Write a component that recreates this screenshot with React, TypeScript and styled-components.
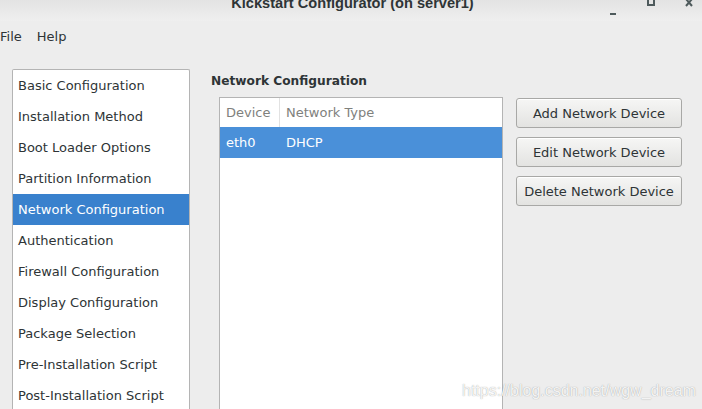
import React from 'react';
import styled, { createGlobalStyle } from 'styled-components';

const GlobalStyle = createGlobalStyle`
  html, body {
    margin: 0;
    padding: 0;
    background: #ededed;
    overflow: hidden;
  }
  body {
    font-family: "DejaVu Sans", sans-serif;
    font-size: 13px;
    color: #2e3436;
  }
`;

const Window = styled.div`
  position: relative;
  width: 702px;
  height: 409px;
  overflow: hidden;
  background: #ededed;
`;

const TitleBar = styled.div`
  display: grid;
  grid-template-columns: 1fr auto 1fr;
  height: 21px;
  overflow: hidden;
  background: linear-gradient(to bottom, #e3e3e3, #efefef);
`;

const Title = styled.span`
  grid-column: 2;
  margin-top: -5px;
  line-height: 16px;
  font-family: "Liberation Sans", sans-serif;
  font-weight: 700;
  font-size: 14.6px;
  color: #2e3436;
  padding-left: 3px;
`;

const Controls = styled.div`
  grid-column: 3;
  justify-self: end;
  display: flex;
  align-items: flex-start;
  gap: 30px;
  padding-right: 9px;
  margin-top: -1px;
`;

const MenuBar = styled.div`
  display: flex;
  gap: 15px;
  height: 29px;
  align-items: center;
  padding-top: 1px;
  box-sizing: border-box;
`;

const MenuItem = styled.span`
  font-size: 13px;
`;

const Main = styled.div`
  display: flex;
  align-items: flex-start;
  padding: 19px 0 0 12px;
  gap: 21px;
`;

const SideList = styled.ul`
  list-style: none;
  margin: 0;
  padding: 0;
  width: 176px;
  height: 360px;
  background: #fff;
  border: 1px solid #b4b4b4;
  border-bottom: none;
  border-radius: 2px 2px 0 0;
`;

const SideItem = styled.li<{ $active?: boolean }>`
  height: 31px;
  line-height: 31px;
  padding-left: 5px;
  white-space: nowrap;
  background: ${p => (p.$active ? '#3981cd' : 'transparent')};
  color: ${p => (p.$active ? '#fff' : '#2e3436')};
`;

const Content = styled.div`
  display: flex;
  flex-direction: column;
`;

const Heading = styled.div`
  margin-top: 2px;
  line-height: 20px;
  font-weight: 700;
  font-size: 12.2px;
`;

const Body = styled.div`
  display: flex;
  align-items: flex-start;
  gap: 13px;
  margin: 6px 0 0 8px;
`;

const Table = styled.div`
  width: 282px;
  height: 320px;
  background: #fff;
  border: 1px solid #b4b4b4;
  border-bottom: none;
`;

const Row = styled.div<{ $head?: boolean; $selected?: boolean }>`
  display: grid;
  grid-template-columns: 60px 1fr;
  height: ${p => (p.$head ? '29px' : '31px')};
  align-items: center;
  background: ${p => (p.$selected ? '#4a90d9' : 'transparent')};
  color: ${p => (p.$head ? '#7f817d' : p.$selected ? '#fff' : '#2e3436')};
`;

const Cell = styled.div<{ $divider?: boolean }>`
  padding-left: 6px;
  height: 100%;
  display: flex;
  align-items: center;
  border-right: ${p => (p.$divider ? '1px solid #e2e2e2' : 'none')};
`;

const Buttons = styled.div`
  display: flex;
  flex-direction: column;
  gap: 9px;
  margin-top: 1px;
`;

const Button = styled.button`
  width: 166px;
  height: 30px;
  font-family: "DejaVu Sans", sans-serif;
  font-size: 13px;
  color: #2e3436;
  background: linear-gradient(to bottom, #f6f6f5, #e3e3e1);
  border: 1px solid #a8a8a6;
  border-radius: 3px;
  box-shadow: inset 0 1px #fff;
  padding: 0;
`;

const Watermark = styled.div`
  position: absolute;
  left: 462px;
  top: 382px;
  font-family: "Liberation Sans", sans-serif;
  font-size: 16px;
  color: rgba(255, 255, 255, 0.9);
  text-shadow: 0 0 1px rgba(110, 110, 110, 0.7);
  white-space: nowrap;
`;

const ControlIcon = ({ kind }: { kind: 'min' | 'max' | 'close' }) => (
  <svg width="8" height="16" viewBox="0 0 8 16">
    {kind === 'min' && <rect x="1" y="14" width="6" height="2" fill="#4e5a5c" />}
    {kind === 'max' && (
      <rect x="1" y="0" width="6" height="6" fill="none" stroke="#4e5a5c" strokeWidth="2" />
    )}
    {kind === 'close' && (
      <path d="M1 0 L7 7 M7 0 L1 7" stroke="#4e5a5c" strokeWidth="2" fill="none" />
    )}
  </svg>
);

const sections = [
  'Basic Configuration',
  'Installation Method',
  'Boot Loader Options',
  'Partition Information',
  'Network Configuration',
  'Authentication',
  'Firewall Configuration',
  'Display Configuration',
  'Package Selection',
  'Pre-Installation Script',
  'Post-Installation Script',
];

export default function App() {
  return (
    <>
      <GlobalStyle />
      <Window>
        <TitleBar>
          <Title>Kickstart Configurator (on server1)</Title>
          <Controls>
            <ControlIcon kind="min" />
            <ControlIcon kind="max" />
            <ControlIcon kind="close" />
          </Controls>
        </TitleBar>
        <MenuBar>
          <MenuItem>File</MenuItem>
          <MenuItem>Help</MenuItem>
        </MenuBar>
        <Main>
          <SideList>
            {sections.map(s => (
              <SideItem key={s} $active={s === 'Network Configuration'}>
                {s}
              </SideItem>
            ))}
          </SideList>
          <Content>
            <Heading>Network Configuration</Heading>
            <Body>
              <Table>
                <Row $head>
                  <Cell $divider>Device</Cell>
                  <Cell>Network Type</Cell>
                </Row>
                <Row $selected>
                  <Cell>eth0</Cell>
                  <Cell>DHCP</Cell>
                </Row>
              </Table>
              <Buttons>
                <Button>Add Network Device</Button>
                <Button>Edit Network Device</Button>
                <Button>Delete Network Device</Button>
              </Buttons>
            </Body>
          </Content>
        </Main>
        <Watermark>https://blog.csdn.net/wgw_dream</Watermark>
      </Window>
    </>
  );
}
